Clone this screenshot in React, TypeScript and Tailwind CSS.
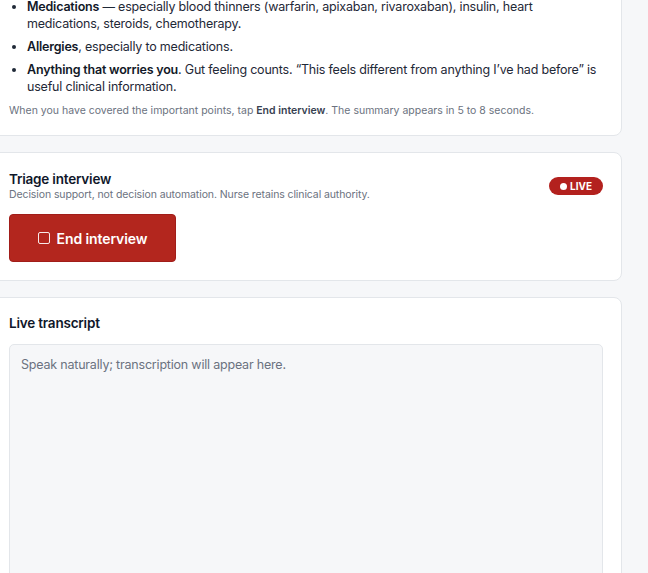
import React from "react";

export default function App() {
  return (
    <div className="min-h-screen w-full overflow-hidden bg-[#f6f7f9]" style={{ fontFamily: "Inter, 'Liberation Sans', sans-serif" }}>
      <div className="ml-[-10px] mt-[-21px] flex w-[632px] flex-col gap-4">
        {/* Card 1 */}
        <div className="rounded-lg border border-[#e3e6ea] bg-white px-[18px] pb-[16px] pt-[18px]">
          <ul className="list-disc space-y-[6px] pl-[18px] text-[12.5px] leading-[17px] tracking-[-0.2px] text-[#1f2937] marker:text-[#1f2937]">
            <li>
              <strong className="font-semibold text-[#111827]">Medications</strong> — especially blood thinners (warfarin, apixaban, rivaroxaban), insulin, heart medications, steroids, chemotherapy.
            </li>
            <li>
              <strong className="font-semibold text-[#111827]">Allergies</strong>, especially to medications.
            </li>
            <li>
              <strong className="font-semibold text-[#111827]">Anything that worries you</strong>. Gut feeling counts. “This feels different from anything I’ve had before” is useful clinical information.
            </li>
          </ul>
          <p className="mt-[8px] text-[10.5px] leading-[16px] text-[#6b7280]">
            When you have covered the important points, tap <strong className="font-semibold text-[#374151]">End interview</strong>. The summary appears in 5 to 8 seconds.
          </p>
        </div>

        {/* Card 2 */}
        <div className="rounded-lg border border-[#e3e6ea] bg-white px-[18px] pb-[18px] pt-[18px]">
          <div className="flex items-center justify-between">
            <div>
              <h2 className="text-[13.5px] font-semibold leading-[17px] tracking-[-0.2px] text-[#0f172a]">Triage interview</h2>
              <p className="text-[10.5px] leading-[13px] tracking-[-0.1px] text-[#6b7280]">Decision support, not decision automation. Nurse retains clinical authority.</p>
            </div>
            <span className="flex h-[18px] w-[54px] items-center justify-center gap-[3px] rounded-full bg-[#b3211e] text-[10px] font-bold leading-none text-white">
              <span className="h-[7px] w-[7px] rounded-full bg-white" />
              LIVE
            </span>
          </div>
          <button className="mt-[13px] flex h-[48px] w-[167px] items-center justify-center gap-[7px] rounded-[4px] border border-[#a11d19] bg-[#b3261e] text-[14px] font-semibold tracking-[-0.1px] text-white">
            <span className="h-[12px] w-[12px] rounded-[2px] border-[1.5px] border-white/90" />
            End interview
          </button>
        </div>

        {/* Card 3 */}
        <div className="rounded-lg border border-[#e3e6ea] bg-white px-[18px] pt-[17px]">
          <h2 className="text-[13.5px] font-semibold leading-[17px] tracking-[-0.2px] text-[#0f172a]">Live transcript</h2>
          <div className="mt-[12px] h-[320px] rounded-[5px] border border-[#e3e6ea] bg-[#f6f7f9] px-[11px] py-[11px] text-[12.5px] leading-[18px] tracking-[-0.2px] text-[#6b7280]">
            Speak naturally; transcription will appear here.
          </div>
        </div>
      </div>
    </div>
  );
}
